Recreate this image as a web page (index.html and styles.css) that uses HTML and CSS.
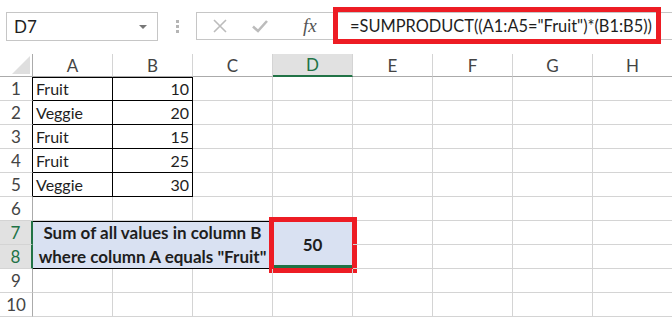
FILE: index.html
```html
<!DOCTYPE html>
<html lang="en">
<head>
    <meta charset="UTF-8">
    <title>SUMPRODUCT example</title>
    <link rel="stylesheet" href="styles.css">
</head>
<body>
    <div class="toolbar">
        <div class="name-box">
            <span>D7</span>
            <span class="caret"></span>
        </div>
        <div class="grip"><i></i><i></i><i></i></div>
        <div class="formula-bar">
            <div class="fx-buttons">
                <svg class="btn" width="16" height="16" viewBox="0 0 16 16"><path d="M2 2L14 14M14 2L2 14" stroke="#bcbcbc" stroke-width="1.6" fill="none"/></svg>
                <svg class="btn" width="18" height="16" viewBox="0 0 18 16"><path d="M2 8.5L7 13L16 3" stroke="#bcbcbc" stroke-width="2.6" fill="none"/></svg>
                <span class="fx">fx</span>
            </div>
            <div class="formula">=SUMPRODUCT((A1:A5="Fruit")*(B1:B5))</div>
        </div>
    </div>

    <div class="sheet">
        <div class="hd corner"><span class="tri"></span></div>
        <div class="hd col">A</div>
        <div class="hd col">B</div>
        <div class="hd col">C</div>
        <div class="hd col active">D</div>
        <div class="hd col">E</div>
        <div class="hd col">F</div>
        <div class="hd col">G</div>
        <div class="hd col">H</div>

        <div class="hd row edge">1</div>
        <div class="c d top">Fruit</div>
        <div class="c d top num">10</div>
        <div class="c"></div><div class="c"></div><div class="c"></div><div class="c"></div><div class="c"></div><div class="c"></div>

        <div class="hd row edge">2</div>
        <div class="c d">Veggie</div>
        <div class="c d num">20</div>
        <div class="c"></div><div class="c"></div><div class="c"></div><div class="c"></div><div class="c"></div><div class="c"></div>

        <div class="hd row edge">3</div>
        <div class="c d">Fruit</div>
        <div class="c d num">15</div>
        <div class="c"></div><div class="c"></div><div class="c"></div><div class="c"></div><div class="c"></div><div class="c"></div>

        <div class="hd row edge">4</div>
        <div class="c d">Fruit</div>
        <div class="c d num">25</div>
        <div class="c"></div><div class="c"></div><div class="c"></div><div class="c"></div><div class="c"></div><div class="c"></div>

        <div class="hd row edge">5</div>
        <div class="c d">Veggie</div>
        <div class="c d num">30</div>
        <div class="c"></div><div class="c"></div><div class="c"></div><div class="c"></div><div class="c"></div><div class="c"></div>

        <div class="hd row">6</div>
        <div class="c"></div><div class="c"></div><div class="c"></div><div class="c"></div><div class="c"></div><div class="c"></div><div class="c"></div><div class="c"></div>

        <div class="hd row sel">7</div>
        <div class="c label">Sum of all values in column B<br>where column A equals "Fruit"</div>
        <div class="c result">50</div>
        <div class="c"></div><div class="c"></div><div class="c"></div><div class="c"></div>

        <div class="hd row sel">8</div>
        <div class="c"></div><div class="c"></div><div class="c"></div><div class="c"></div>

        <div class="hd row">9</div>
        <div class="c"></div><div class="c"></div><div class="c"></div><div class="c"></div><div class="c"></div><div class="c"></div><div class="c"></div><div class="c"></div>

        <div class="hd row">10</div>
        <div class="c"></div><div class="c"></div><div class="c"></div><div class="c"></div><div class="c"></div><div class="c"></div><div class="c"></div><div class="c"></div>
    </div>
</body>
</html>
```

FILE: styles.css
```css
/* Page */
body {
    margin: 0;
    width: 672px;
    background: #fff;
    font-family: 'Lato', 'Open Sans', sans-serif;
    color: #1e1e1e;
    overflow: hidden;
}

/* Formula bar */
.toolbar {
    height: 54px;
    box-sizing: border-box;
    padding: 12px 0 0 6px;
    display: grid;
    grid-template-columns: 152px 38px 1fr;
    align-items: start;
}

.name-box {
    height: 29px;
    box-sizing: border-box;
    border: 1px solid #c6c6c6;
    display: flex;
    align-items: center;
    justify-content: space-between;
    padding: 0 10px 0 7px;
    font-size: 17px;
}

.caret {
    width: 0;
    height: 0;
    border-left: 4px solid transparent;
    border-right: 4px solid transparent;
    border-top: 4px solid #777;
}

.grip {
    height: 29px;
    display: flex;
    flex-direction: column;
    align-items: center;
    justify-content: center;
    gap: 2px;
}

.grip i {
    width: 3px;
    height: 3px;
    background: #b5b5b5;
}

.formula-bar {
    height: 28px;
    box-sizing: border-box;
    border: 1px solid #c6c6c6;
    border-right: none;
    display: grid;
    grid-template-columns: 141px 318px;
}

.fx-buttons {
    display: flex;
    align-items: center;
    padding-left: 15px;
    gap: 23px;
    overflow: hidden;
}

.fx {
    font-family: 'Liberation Serif', serif;
    font-style: italic;
    font-size: 19px;
    color: #555;
    margin-left: 11px;
}

.formula {
    height: 27px;
    margin-top: -1px;
    box-sizing: border-box;
    padding-left: 12px;
    outline: 5px solid #ed1c24;
    display: flex;
    align-items: center;
    font-size: 16.4px;
    white-space: nowrap;
    overflow: hidden;
}

/* Sheet grid */
.sheet {
    display: grid;
    grid-template-columns: 33px repeat(8, 80px);
    grid-template-rows: 23px repeat(10, 24px);
    font-size: 16px;
}

.hd {
    box-sizing: border-box;
    display: flex;
    align-items: center;
    justify-content: center;
    color: #444;
    background: #fff;
    font-size: 17px;
    border-right: 1px solid #d4d4d4;
    border-bottom: 1px solid #d4d4d4;
}

.col {
    border-bottom-color: #ababab;
}

.col.active {
    background: #e1e1e1;
    color: #217346;
    border-bottom: 2px solid #217346;
}

.row {
    border-right-color: #ababab;
}

.row.edge {
    border-right-color: #000;
}

.row.sel {
    background: #e1e1e1;
    color: #217346;
    border-right: 2px solid #217346;
}

.corner {
    border-bottom-color: #ababab;
    border-right-color: #ababab;
    align-items: flex-end;
    justify-content: flex-end;
    padding: 0 2px 2px 0;
}

.tri {
    width: 18px;
    height: 18px;
    background: #dfdfdf;
    clip-path: polygon(100% 0, 100% 100%, 0 100%);
}

.c {
    box-sizing: border-box;
    border-right: 1px solid #d4d4d4;
    border-bottom: 1px solid #d4d4d4;
    padding: 0 3px;
    display: flex;
    align-items: center;
    white-space: nowrap;
}

.c.d {
    border-right-color: #000;
    border-bottom-color: #000;
}

.c.top {
    box-shadow: inset 0 1px #000;
}

.c.num {
    justify-content: flex-end;
}

.c.label {
    grid-column: span 3;
    grid-row: span 2;
    flex-direction: column;
    justify-content: space-around;
    background: #d9e1f2;
    font-size: 17px;
    font-weight: bold;
    text-align: center;
    line-height: 24px;
    border-right-color: #000;
    border-bottom-color: #000;
    box-shadow: inset 0 1px #000;
}

.c.result {
    grid-row: span 2;
    justify-content: center;
    background: #d9e1f2;
    font-size: 17px;
    font-weight: bold;
    box-shadow: inset 0 -3px #217346;
    outline: 5px solid #ed1c24;
    outline-offset: -1px;
}
```
